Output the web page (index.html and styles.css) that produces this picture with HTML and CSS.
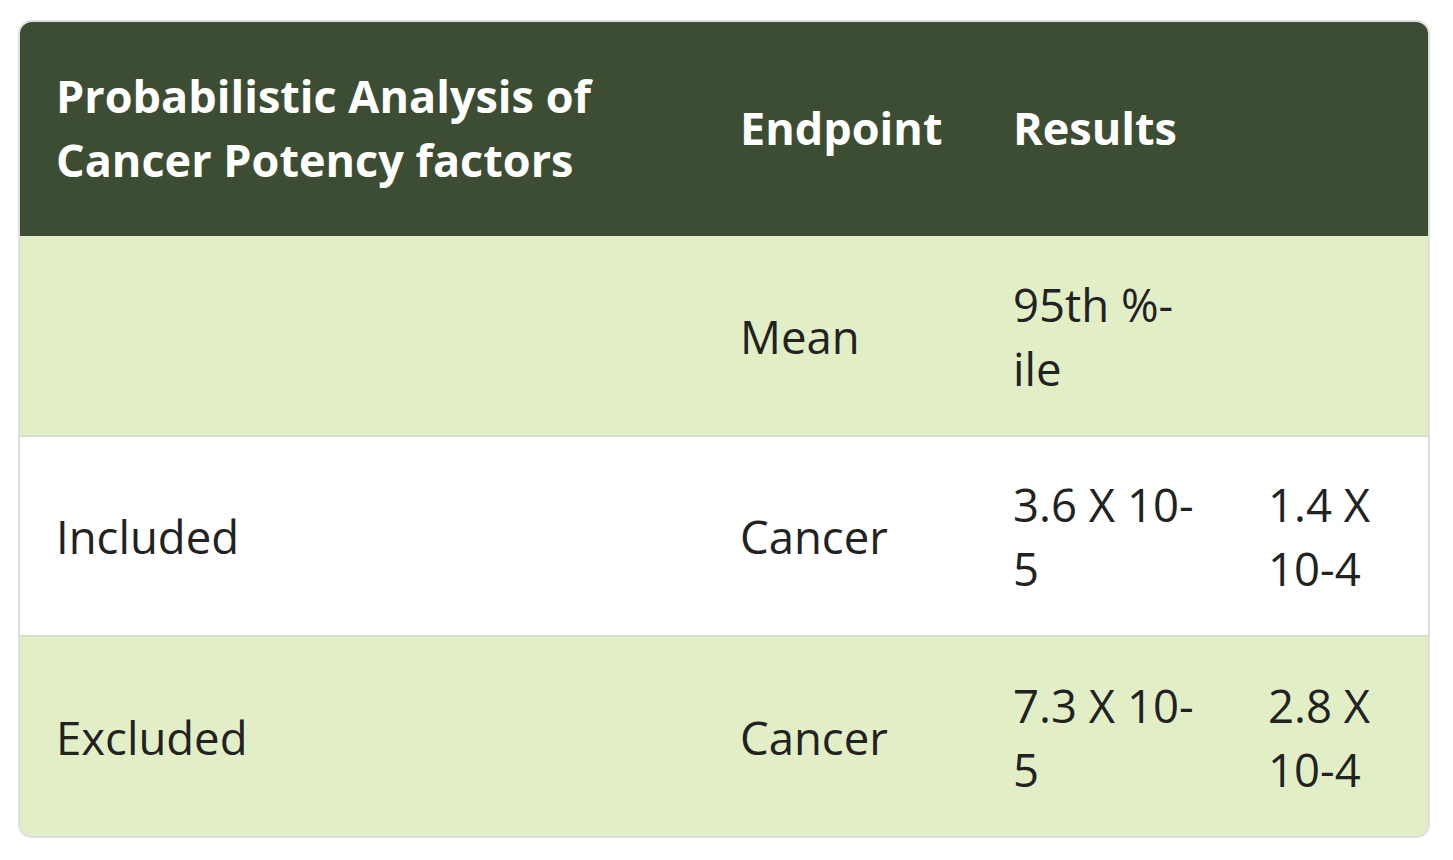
FILE: index.html
```html
<!DOCTYPE html>
<html lang="en">
<head>
<meta charset="utf-8">
<title>Probabilistic Analysis of Cancer Potency factors</title>
<link rel="stylesheet" href="styles.css">
</head>
<body>
<div class="table-wrap">
  <table class="data-table">
    <colgroup>
      <col class="c1"><col class="c2"><col class="c3"><col class="c4">
    </colgroup>
    <thead>
      <tr>
        <th>Probabilistic Analysis of Cancer Potency factors</th>
        <th>Endpoint</th>
        <th>Results</th>
        <th></th>
      </tr>
    </thead>
    <tbody>
      <tr class="alt">
        <td></td>
        <td>Mean</td>
        <td>95th %-ile</td>
        <td></td>
      </tr>
      <tr>
        <td>Included</td>
        <td>Cancer</td>
        <td>3.6 X 10-5</td>
        <td>1.4 X 10-4</td>
      </tr>
      <tr class="alt">
        <td>Excluded</td>
        <td>Cancer</td>
        <td>7.3 X 10-5</td>
        <td>2.8 X 10-4</td>
      </tr>
    </tbody>
  </table>
</div>
</body>
</html>
```
FILE: styles.css
```css
html, body {
  margin: 0;
  padding: 0;
  background: #ffffff;
}

body {
  font-family: "Open Sans", "Noto Sans", sans-serif;
  color: #222222;
}

.table-wrap {
  margin: 20px 0 0 18px;
  width: 1412px;
  border: 2px solid #dedede;
  border-radius: 14px;
  overflow: hidden;
  box-sizing: border-box;
}

.data-table {
  width: 100%;
  border-collapse: collapse;
  table-layout: fixed;
}

.c1 { width: 684px; }
.c2 { width: 273px; }
.c3 { width: 255px; }
.c4 { width: auto; }

.data-table th,
.data-table td {
  padding: 0 26px 0 36px;
  text-align: left;
  vertical-align: middle;
  line-height: 64px;
}

.data-table thead tr {
  background: #3d4d33;
  height: 214px;
}

.data-table th {
  color: #ffffff;
  font-weight: 700;
  font-size: 45px;
  padding-top: 40px;
  padding-bottom: 43px;
}

.data-table tbody tr {
  height: 200px;
  background: #ffffff;
}

.data-table tbody tr.alt {
  background: #e2efc6;
}

.data-table tbody tr + tr {
  border-top: 2px solid #d5dfc6;
}

.data-table td {
  font-weight: 400;
  font-size: 45.5px;
  color: #222222;
}
```
